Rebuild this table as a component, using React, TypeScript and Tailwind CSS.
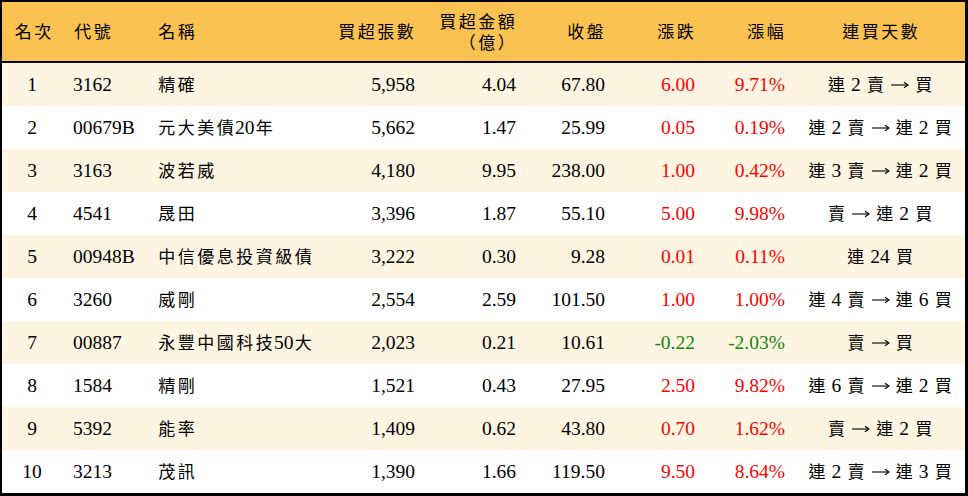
import { Fragment } from 'react'

type Row = {
  rank: number
  code: string
  name: string
  lots: string
  amount: string
  close: string
  change: string
  pct: string
  streak: string
}

const rows: Row[] = [
  { rank: 1, code: '3162', name: '精確', lots: '5,958', amount: '4.04', close: '67.80', change: '6.00', pct: '9.71%', streak: '連 2 賣 → 買' },
  { rank: 2, code: '00679B', name: '元大美債20年', lots: '5,662', amount: '1.47', close: '25.99', change: '0.05', pct: '0.19%', streak: '連 2 賣 → 連 2 買' },
  { rank: 3, code: '3163', name: '波若威', lots: '4,180', amount: '9.95', close: '238.00', change: '1.00', pct: '0.42%', streak: '連 3 賣 → 連 2 買' },
  { rank: 4, code: '4541', name: '晟田', lots: '3,396', amount: '1.87', close: '55.10', change: '5.00', pct: '9.98%', streak: '賣 → 連 2 買' },
  { rank: 5, code: '00948B', name: '中信優息投資級債', lots: '3,222', amount: '0.30', close: '9.28', change: '0.01', pct: '0.11%', streak: '連 24 買' },
  { rank: 6, code: '3260', name: '威剛', lots: '2,554', amount: '2.59', close: '101.50', change: '1.00', pct: '1.00%', streak: '連 4 賣 → 連 6 買' },
  { rank: 7, code: '00887', name: '永豐中國科技50大', lots: '2,023', amount: '0.21', close: '10.61', change: '-0.22', pct: '-2.03%', streak: '賣 → 買' },
  { rank: 8, code: '1584', name: '精剛', lots: '1,521', amount: '0.43', close: '27.95', change: '2.50', pct: '9.82%', streak: '連 6 賣 → 連 2 買' },
  { rank: 9, code: '5392', name: '能率', lots: '1,409', amount: '0.62', close: '43.80', change: '0.70', pct: '1.62%', streak: '賣 → 連 2 買' },
  { rank: 10, code: '3213', name: '茂訊', lots: '1,390', amount: '1.66', close: '119.50', change: '9.50', pct: '8.64%', streak: '連 2 賣 → 連 3 買' },
]

function Arrow() {
  return (
    <svg width="19" height="10" viewBox="0 0 19 10" className="inline-block align-[1px]">
      <path d="M1 5H17.5" stroke="currentColor" strokeWidth="1.1" fill="none" />
      <path d="M14 2.2L18 5L14 7.8" stroke="currentColor" strokeWidth="1.1" fill="none" />
    </svg>
  )
}

// CJK runs: smaller glyph + tracking so each char advances ~19.5px, glyph centred in its box
function Txt({ s }: { s: string }) {
  const parts = s.split(/([\u3000-\u9fff\uff00-\uffef]+|→)/)
  return (
    <>
      {parts.map((p, i) => {
        if (p === '→') return <Arrow key={i} />
        if (/[\u3000-\u9fff\uff00-\uffef]/.test(p))
          return (
            <span
              key={i}
              className="text-[17px] tracking-[2.5px] pl-[1.25px] mr-[-1.25px] font-['Noto_Sans_CJK_TC',sans-serif]"
            >
              {p}
            </span>
          )
        return <Fragment key={i}>{p}</Fragment>
      })}
    </>
  )
}

const grid = 'grid grid-cols-[60px_88px_185px_90px_101px_89px_90px_90px_1fr]'

export default function App() {
  return (
    <div className="w-[968px] h-[496px] bg-white font-['Liberation_Serif','Noto_Sans_CJK_TC',serif] text-[19.5px] text-black">
      <div className="h-full border-l-2 border-t-2 border-r-[3px] border-b-[3px] border-black flex flex-col">
        <div className={`${grid} h-[61px] bg-[#f9c251] border-b-2 border-black items-center leading-[20px]`}>
          <div className="text-center pl-[2px]"><Txt s="名次" /></div>
          <div className="pl-[11px]"><Txt s="代號" /></div>
          <div className="pl-[7px]"><Txt s="名稱" /></div>
          <div className="text-right pr-[10px]"><Txt s="買超張數" /></div>
          <div className="text-right pr-[10px] flex flex-col">
            <span><Txt s="買超金額" /></span>
            <span><Txt s="（億）" /></span>
          </div>
          <div className="text-right pr-[10px]"><Txt s="收盤" /></div>
          <div className="text-right pr-[10px]"><Txt s="漲跌" /></div>
          <div className="text-right pr-[10px]"><Txt s="漲幅" /></div>
          <div className="text-center"><Txt s="連買天數" /></div>
        </div>
        {rows.map((r) => {
          const color = r.change.startsWith('-') ? 'text-[#138513]' : 'text-[#ff0000]'
          return (
            <div
              key={r.rank}
              className={`${grid} h-[43px] items-center ${r.rank % 2 === 1 ? 'bg-[#fdf5e1]' : 'bg-white'}`}
            >
              <div className="text-center">{r.rank}</div>
              <div className="pl-[11px]">{r.code}</div>
              <div className="pl-[7px] whitespace-nowrap"><Txt s={r.name} /></div>
              <div className="text-right pr-[10px]">{r.lots}</div>
              <div className="text-right pr-[10px]">{r.amount}</div>
              <div className="text-right pr-[10px]">{r.close}</div>
              <div className={`text-right pr-[10px] ${color}`}>{r.change}</div>
              <div className={`text-right pr-[10px] ${color}`}>{r.pct}</div>
              <div className="text-center whitespace-nowrap"><Txt s={r.streak} /></div>
            </div>
          )
        })}
      </div>
    </div>
  )
}
